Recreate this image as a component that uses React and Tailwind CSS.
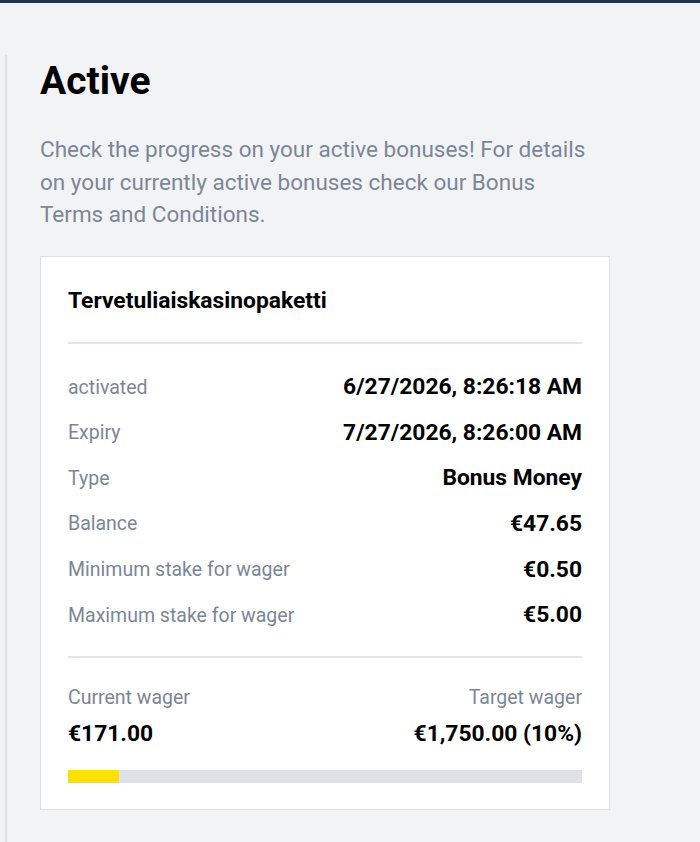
export default function App() {
  const rows = [
    ["activated", "6/27/2026, 8:26:18 AM"],
    ["Expiry", "7/27/2026, 8:26:00 AM"],
    ["Type", "Bonus Money"],
    ["Balance", "€47.65"],
    ["Minimum stake for wager", "€0.50"],
    ["Maximum stake for wager", "€5.00"],
  ];
  const pct = 10;

  return (
    <div className="min-h-[842px] bg-[#f2f3f5] font-['Roboto',sans-serif]">
      <div className="h-[3px] bg-[#1c3854]" />
      <div className="mt-[52px] ml-[5px] min-h-[787px] border-l-2 border-[#dfe2e7] pl-[33px]">
        <div className="w-[570px] pt-[6px]">
          <h1 className="text-[39px] font-bold leading-[40px] text-black">Active</h1>
          <p className="mt-[32px] w-[556px] text-[22.5px] leading-[32.5px] text-[#7b8698]">
            Check the progress on your active bonuses! For details on your currently active bonuses check our Bonus Terms and Conditions.
          </p>

          <div className="mt-[25px] border border-[#dcdfe4] bg-white px-[27px] pt-[28px] pb-[26px]">
            <div className="border-b-2 border-[#e3e5ea] pb-[25px] text-[22.8px] font-bold leading-[32px] text-black">
              Tervetuliaiskasinopaketti
            </div>

            <div className="border-b-2 border-[#e3e5ea] pt-[21px] pb-[18px]">
              {rows.map(([label, value]) => (
                <div key={label} className="flex h-[45.6px] items-center justify-between">
                  <span className="text-[19.5px] text-[#7b8698]">{label}</span>
                  <span className="text-[22.8px] font-bold text-black">{value}</span>
                </div>
              ))}
            </div>

            <div className="pt-[26px]">
              <div className="flex justify-between text-[19.5px] leading-[28px] text-[#7b8698]">
                <span>Current wager</span>
                <span>Target wager</span>
              </div>
              <div className="mt-[6px] flex justify-between text-[22.8px] font-bold leading-[32px] text-black">
                <span>€171.00</span>
                <span>€1,750.00 (10%)</span>
              </div>
              <div className="mt-[20px] h-[13px] bg-[#dfe1e8]">
                <div className="h-full bg-[#ffe100]" style={{ width: `${pct}%` }} />
              </div>
            </div>
          </div>
        </div>
      </div>
    </div>
  );
}
